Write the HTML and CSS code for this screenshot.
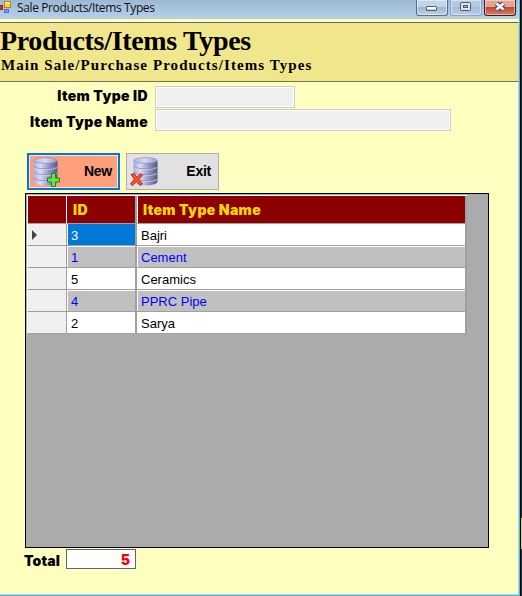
FILE: index.html
```html
<!DOCTYPE html>
<html lang="en">
<head>
<meta charset="utf-8">
<title>Sale Products/Items Types</title>
<link rel="stylesheet" href="styles.css">
</head>
<body>
<svg width="0" height="0" class="defs">
  <defs>
    <linearGradient id="drum"><stop offset="0" stop-color="#a9a9d6"/><stop offset=".28" stop-color="#dcdcf5"/><stop offset=".6" stop-color="#9c9ccb"/><stop offset="1" stop-color="#55557f"/></linearGradient>
    <linearGradient id="lid"><stop offset="0" stop-color="#b9b9e2"/><stop offset=".5" stop-color="#d8d8f4"/><stop offset="1" stop-color="#9898ca"/></linearGradient>
    <symbol id="db" viewBox="0 0 25 29">
      <path d="M.5 3.500v21c0 2 5 4 12 4s12-2 12-4v-21z" fill="url(#drum)"/>
      <ellipse cx="12.500" cy="3.500" rx="11.700" ry="2.800" fill="url(#lid)" stroke="#8a8abb" stroke-width=".7"/>
      <path d="M.5 9.500c2 3 22 3 24 0M.5 15.500c2 3 22 3 24 0M.5 21.500c2 3 22 3 24 0" fill="none" stroke="#8484b6" stroke-width=".8"/>
      <path d="M1 10.700c3 2.700 19 2.700 23 0M1 16.700c3 2.700 19 2.700 23 0M1 22.700c3 2.700 19 2.700 23 0" fill="none" stroke="#dedef6" stroke-width=".6"/>
    </symbol>
  </defs>
</svg>
<div class="desktop">
  <div class="window">
    <header class="titlebar">
      <svg class="app-icon" width="12" height="14" viewBox="0 0 12 14">
        <path d="M0 5.500h2.500v4H0" fill="#d93525" stroke="#8e1c14"/>
        <rect x="4.500" y="1.500" width="6" height="6" fill="#ffd033" stroke="#b88610"/>
        <path d="M5 2h5v2H5z" fill="#ffe995"/>
        <rect x="4.500" y="9.500" width="4" height="3" fill="#6f9ff2" stroke="#4672cc"/>
      </svg>
      <span class="caption">Sale Products/Items Types</span>
      <div class="controls">
        <span class="ctl"><svg width="30" height="14"><rect x="9.500" y="6.500" width="10" height="4" rx=".5" fill="#fff" stroke="#555d6b"/><path d="M10 9.500h9" stroke="#d0d0d0"/></svg></span>
        <span class="ctl ctl-max"><svg width="30" height="14"><rect x="9.500" y="2.500" width="10" height="8" rx="1" fill="#dfe5eb" stroke="#4e5663"/><rect x="12.500" y="5.500" width="4" height="2" fill="#9fc0e0" stroke="#4e5663"/></svg></span>
        <span class="ctl ctl-close"><svg width="30" height="14"><path d="M11.500 3.500l7 6M18.500 3.500l-7 6" stroke="#4b4d5c" stroke-width="5"/><path d="M11.500 3.500l7 6M18.500 3.500l-7 6" stroke="#f2f2f2" stroke-width="2.700"/></svg></span>
      </div>
    </header>
    <section class="banner">
      <h1>Products/Items Types</h1>
      <h2>Main Sale/Purchase Products/Items Types</h2>
    </section>
    <main>
      <div class="field"><label>Item Type ID</label><span class="input short"></span></div>
      <div class="field"><label>Item Type Name</label><span class="input"></span></div>
      <div class="actions">
        <button class="btn btn-new">
          <svg width="28" height="30"><use href="#db" x="0" y="0" width="25" height="29"/><path d="M18.500 16.500h4v4.500h4v4h-4v4.500h-4V25h-4v-4h4z" fill="#75dc4c" stroke="#128c18"/></svg>
          <span>New</span>
        </button>
        <button class="btn">
          <svg width="28" height="30"><use href="#db" x="3" y="0" width="25" height="29"/><path d="M1 17.500l3-1 3 4 3.500-4 2 1.500-3.500 4.500 3.500 4.500-2.500 1.500-3.500-4-4 4-2-1.500 4-5z" fill="#f4562c" stroke="#bb2c16"/></svg>
          <span>Exit</span>
        </button>
      </div>
      <div class="grid">
        <div class="row head"><span></span><span>ID</span><span>Item Type Name</span></div>
        <div class="row"><span><i class="marker"></i></span><span class="selected">3</span><span>Bajri</span></div>
        <div class="row alt"><span></span><span>1</span><span>Cement</span></div>
        <div class="row"><span></span><span>5</span><span>Ceramics</span></div>
        <div class="row alt"><span></span><span>4</span><span>PPRC Pipe</span></div>
        <div class="row"><span></span><span>2</span><span>Sarya</span></div>
      </div>
      <footer><label>Total</label><span class="total">5</span></footer>
    </main>
  </div>
  <div class="behind"></div>
</div>
</body>
</html>
```
FILE: styles.css
```css
* { box-sizing: border-box; }
body { margin: 0; overflow: hidden; font-family: "Liberation Sans", Arial, sans-serif; }
.defs { position: absolute; }
.desktop { display: flex; width: 522px; height: 596px; }
.window { display: flex; flex-direction: column; width: 520px; height: 596px; background: #ffffc0; border-right: 1px solid #35bfe0; border-bottom: 1px solid #35bfe0; }
.behind { flex: 1; background: linear-gradient(90deg, #000 1px, transparent 1px), linear-gradient(#282828 518px, #ffc81e 518px 549px, #303030 549px); }
.titlebar { display: flex; height: 19px; background: linear-gradient(#9db8d4, #b8d0ea); border-right: 1px solid #b9d3ee; }
.app-icon { flex: none; }
.caption { flex: 1; margin-left: 5px; font: 12px/16px "Open Sans", "Noto Sans", sans-serif; letter-spacing: -.38px; color: #111; }
.controls { display: flex; gap: 2px; margin-right: 2px; }
.ctl { width: 32px; height: 16px; border: 1px solid #596f89; border-top: 0; border-radius: 0 0 3px 3px; background: linear-gradient(#c2d5e8 0 7px, #9bb4cd 7px, #bdd4ea); box-shadow: inset 0 0 0 1px #ffffff70; }
.ctl svg { display: block; }
.ctl-max { border-color: #8aa4c0; background: linear-gradient(#b4cae2 0 7px, #a3bdda 7px, #b5cfeb); }
.ctl-close { border-color: #4a1821; background: linear-gradient(#e5a395 0 7px, #bb452d 7px, #d77f66); }
.banner { height: 60px; margin-top: 3px; border-top: 1px solid #64646c; border-bottom: 1px solid #75744e; border-right: 1px solid #b9d3ee; background: #f0e68c; }
h1, h2 { margin: 0; color: #000; white-space: nowrap; }
h1 { height: 34px; font: bold 28px/35px "Liberation Serif", serif; letter-spacing: -.33px; }
h2 { margin-left: 1px; font: bold 15px/17px "Liberation Serif", serif; letter-spacing: 1.08px; }
main { flex: 1; padding: 4px 29px 0 25px; border-right: 1px solid #b9d3ee; border-bottom: 1px solid #b9d3ee; }
label, .head, .total { font-family: Inter, sans-serif; font-weight: 900; font-size: 14px; }
.field { display: flex; height: 22px; margin-bottom: 1px; line-height: 19px; }
.field + .field label { line-height: 25px; }
.field label { width: 123px; margin-right: 7px; text-align: right; white-space: nowrap; }
label, .head { letter-spacing: .36px; }
.input { width: 296px; border: 1px solid #ccc; background: #efefef; box-shadow: inset 0 0 0 1px #fff; }
.short { width: 140px; }
.actions { display: flex; gap: 6px; margin: 22px 0 3px 2px; }
.btn { display: flex; width: 93px; height: 37px; padding: 3px 7px 0 3px; justify-content: space-between; align-items: flex-start; border: 1px solid #adadad; background: #e1e1e1; font: bold 14px/29px "Liberation Sans", Arial, sans-serif; letter-spacing: -.25px; color: #000; }
.btn-new { padding: 2px 6px 0 4px; border: 2px solid #0078d7; background: #ffa07a; box-shadow: inset 0 0 0 1px #ffe0d0; }
.grid { width: 464px; height: 355px; padding: 1px; border: 1px solid #000; background: #ababab; }
.row { display: grid; grid-template-columns: 40px 70px 330px; grid-template-rows: 100%; width: 440px; height: 22px; font-size: 13px; line-height: 23px; background: #fff; color: #000; }
.row > span { min-height: 0; border-right: 2px solid #a0a0a0; border-bottom: 1px solid #a0a0a0; padding-left: 4px; }
.row > span:first-child { display: flex; align-items: center; border-right-width: 1px; border-left: 1px solid #fff; background: #f0f0f0; }
.row.head { height: 29px; font-size: 14px; line-height: 27px; color: #ffd700; background: #8b0000; border-top: 1px solid #fff; }
.head > span { padding-left: 6px; }
.head > span:first-child { background: #8b0000; border-right-color: #fff; }
.head > span:nth-child(2) { border-right: 2px solid #a0a0a0; box-shadow: 1px 0 #fff; }
.alt { color: #00f; }
.alt > span:not(:first-child) { background: #c0c0c0; box-shadow: inset 1px 1px #fff; }
.row > .selected { color: #fff; background: #0078d7; box-shadow: inset 1px 0 #fff; }
.marker { border: 5px solid transparent; border-left-color: #444; border-right: 0; }
footer { display: flex; height: 22px; padding-top: 1px; }
footer label { width: 42px; margin-left: -1px; line-height: 23px; letter-spacing: .1px; }
.total { width: 70px; height: 20px; padding-right: 5px; border: 1px solid #646464; background: #fff; color: #f00; font-size: 14px; line-height: 19px; text-align: right; }
```
